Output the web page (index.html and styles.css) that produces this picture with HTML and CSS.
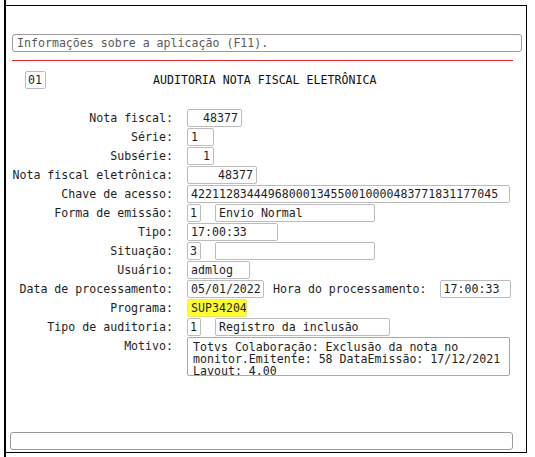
FILE: index.html
```html
<!DOCTYPE html>
<html lang="pt-BR">
<head>
    <meta charset="UTF-8">
    <title>Auditoria NF-e</title>
    <link rel="stylesheet" href="styles.css">
</head>
<body>
<div class="frame">
    <div class="panel">
        <div class="info">Informações sobre a aplicação (F11).</div>
        <div class="rule"></div>

        <div class="heading">
            <span class="box seq">01</span>
            <span class="title">AUDITORIA NOTA FISCAL ELETRÔNICA</span>
        </div>

        <div class="form">
            <label>Nota fiscal:</label>
            <div class="val"><span class="box num w55">48377</span></div>

            <label>Série:</label>
            <div class="val"><span class="box w27">1</span></div>

            <label>Subsérie:</label>
            <div class="val"><span class="box num w27">1</span></div>

            <label>Nota fiscal eletrônica:</label>
            <div class="val"><span class="box num w70">48377</span></div>

            <label>Chave de acesso:</label>
            <div class="val"><span class="box w323">42211283444968000134550010000483771831177045</span></div>

            <label>Forma de emissão:</label>
            <div class="val"><span class="box code">1</span><span class="box w160">Envio Normal</span></div>

            <label>Tipo:</label>
            <div class="val"><span class="box w91">17:00:33</span></div>

            <label>Situação:</label>
            <div class="val"><span class="box code">3</span><span class="box w160"></span></div>

            <label>Usuário:</label>
            <div class="val"><span class="box w63">admlog</span></div>

            <label>Data de processamento:</label>
            <div class="val">
                <span class="box w77">05/01/2022</span>
                <span class="inline-label">Hora do processamento:</span>
                <span class="box w71">17:00:33</span>
            </div>

            <label>Programa:</label>
            <div class="val"><span class="box w60 mark">SUP34204</span></div>

            <label>Tipo de auditoria:</label>
            <div class="val"><span class="box code">1</span><span class="box w175">Registro da inclusão</span></div>

            <label>Motivo:</label>
            <div class="val"><div class="box memo">Totvs Colaboração: Exclusão da nota no<br>monitor.Emitente: 58 DataEmissão: 17/12/2021<br>Layout: 4.00</div></div>
        </div>

        <div class="status"></div>
    </div>
</div>
</body>
</html>
```

FILE: styles.css
```css
body { margin: 0; background: #fff; font-family: "DejaVu Sans Mono", monospace; font-size: 11.6px; color: #1e1e1e; }
.frame { margin-left: 4px; border-left: 2px solid #000; height: 457px; padding-top: 5px; box-sizing: border-box; }
.panel { width: 521px; height: 448px; border: 1px solid #000; border-left: none; box-sizing: border-box; position: relative; }

.info { margin: 28px 0 0 6px; width: 510px; height: 18px; box-sizing: border-box; border: 1px solid #9a9a9a; border-radius: 3px; padding: 0 4px; line-height: 16px; color: #5a5a5a; }
.rule { margin: 8px 0 0 6px; width: 501px; height: 1px; background: #e3242b; }

.heading { display: flex; align-items: center; margin: 10px 0 0 19px; height: 18px; }
.title { margin-left: 107px; color: #111; }

.box { display: inline-block; height: 18px; box-sizing: border-box; border: 1px solid #bcbcbc; border-radius: 2px; padding: 0 3px; line-height: 16px; background: #fff; white-space: nowrap; overflow: hidden; vertical-align: top; }
.box.num { text-align: right; }
.seq { width: 21px; padding: 0 2px; }

.form { display: grid; grid-template-columns: 167px 1fr; column-gap: 14px; row-gap: 1px; margin-top: 20px; }
.form label { text-align: right; line-height: 18px; height: 18px; white-space: nowrap; }
.val { display: flex; align-items: flex-start; height: 18px; }

.code { width: 14px; padding: 0 2px; margin-right: 14px; }
.w27 { width: 27px; }
.w55 { width: 55px; }
.w60 { width: 60px; }
.w63 { width: 63px; }
.w70 { width: 70px; }
.w71 { width: 71px; margin-left: 13px; }
.w77 { width: 77px; }
.w91 { width: 91px; }
.w160 { width: 160px; }
.w175 { width: 175px; }
.w323 { width: 323px; }

.inline-label { margin-left: 9px; line-height: 18px; }
.mark { background: #ffff2e; border-color: #e6e67a; }

/* memo field: the third line is cut by the box edge */
.memo { width: 323px; height: 39px; line-height: 12px; padding: 3px 5px 0; white-space: nowrap; border-color: #a8a8a8; }
.form .val:last-child { height: 39px; }

.status { position: absolute; left: 4px; top: 426px; width: 503px; height: 18px; box-sizing: border-box; border: 1px solid #9a9a9a; border-radius: 3px; }
```
